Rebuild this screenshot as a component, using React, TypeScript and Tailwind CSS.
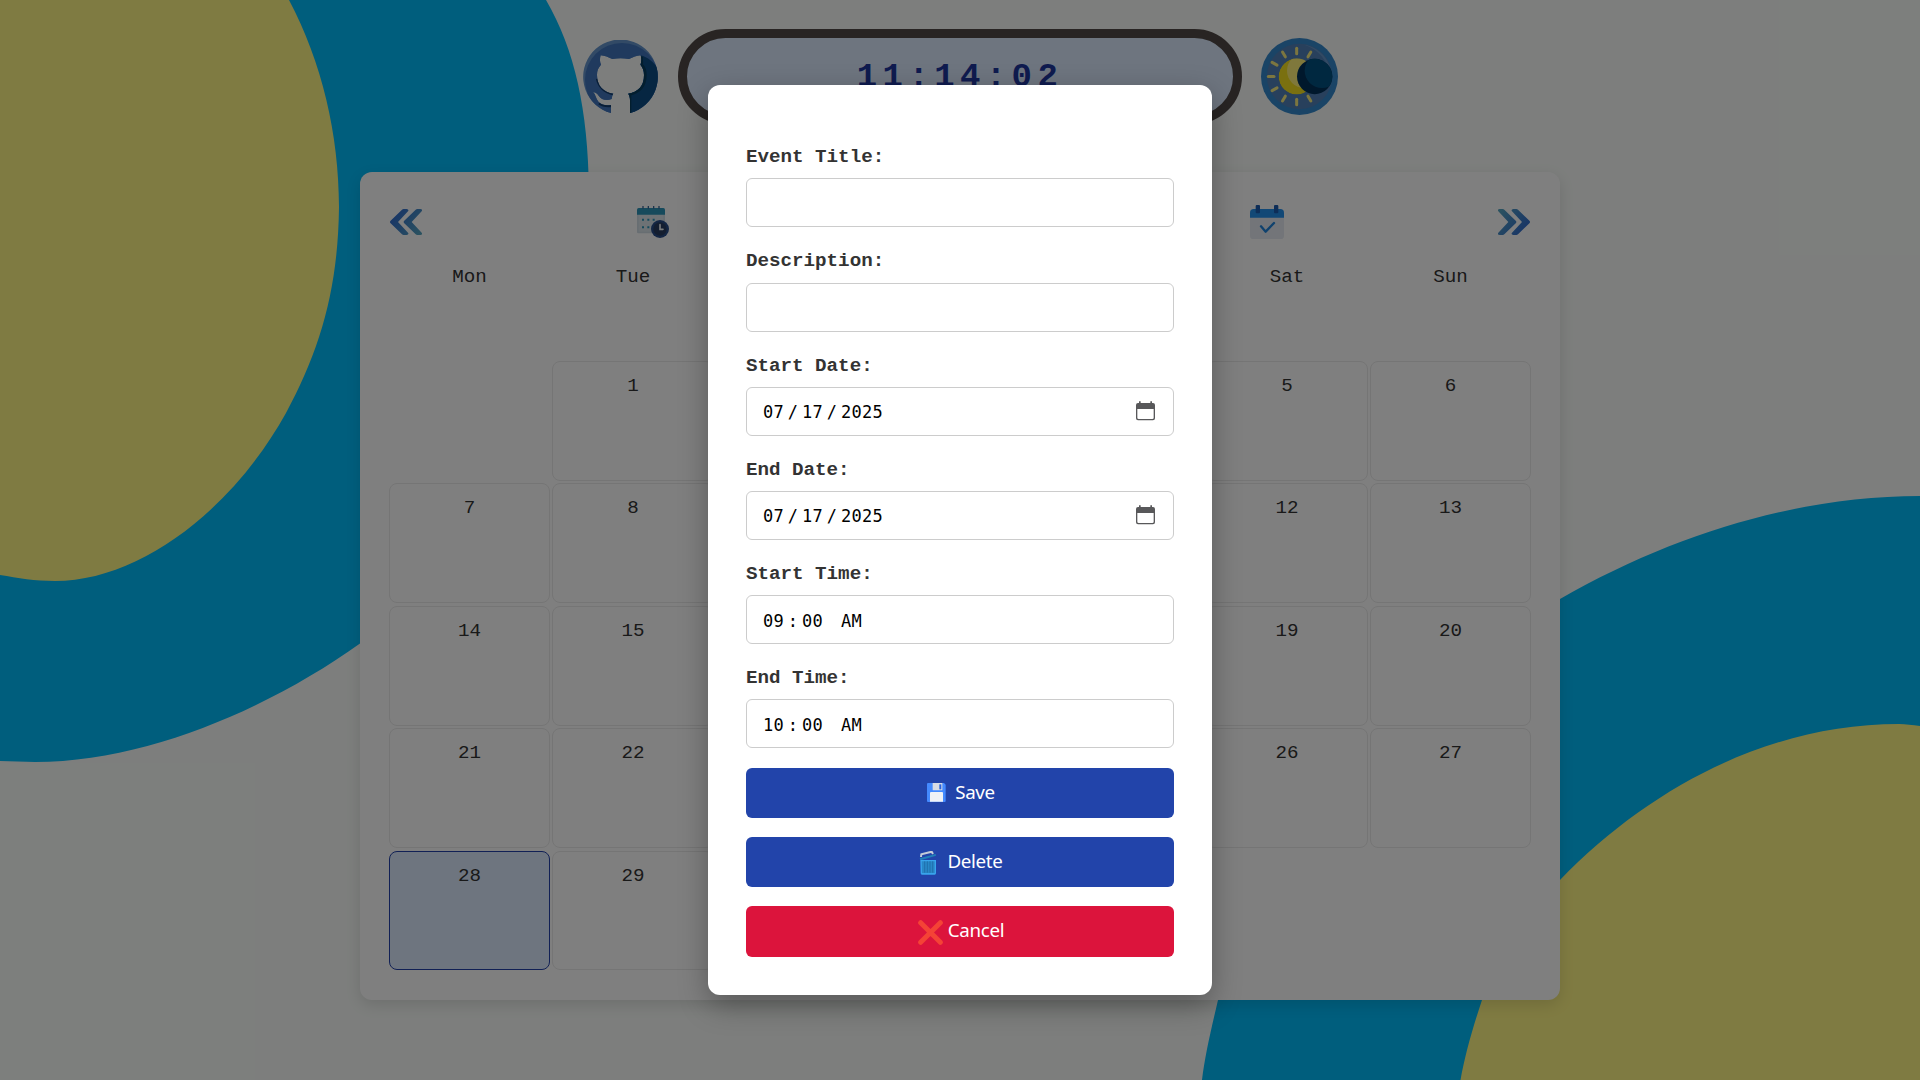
import React from "react";

const DAYS = ["Mon", "Tue", "", "", "", "Sat", "Sun"];
const CELLS: (number | null)[] = [null, ...Array.from({ length: 31 }, (_, i) => i + 1)];

// The open dialog covers the Wednesday to Friday columns, so their labels stay empty.
const isCovered = (index: number) => index % 7 >= 2 && index % 7 <= 4;

function Backdrop() {
  return (
    <svg className="absolute inset-0 h-full w-full" viewBox="0 0 1920 1080">
      <path fill="#00bcfa" d="M0 0H546C575 50 588 110 589 190C592 400 500 550 360 643.500C274 705 150 762 35 762L0 761Z" />
      <path fill="#fff684" d="M0 0H289C322 62 339 135 339 207C338 290 320 350 286 413C232 510 140 581 55 581C35 581 18 578 0 575Z" />
      <path fill="#00bcfa" d="M1920 496C1800 496 1675 533 1560 599C1380 690 1260 830 1218 1000C1211 1030 1205 1055 1202 1080H1920Z" />
      <path fill="#fff684" d="M1920 726C1912 725 1906 724 1899 724C1770 724 1650 787 1560 880C1525 916 1500 955 1482 1000C1472 1030 1465 1055 1460.500 1080H1920Z" />
    </svg>
  );
}

const CAT =
  "M84 219A112 112 0 1 1 141 219V180C141 172 139 165 135 161C165 157 183 138 183 105C183 92 179 82 172 74C176 64 176 56 173 46C160 47 150 52 138 57C122 54 103 54 88 57C76 52 66 47 53 46C50 56 50 64 54 74C45 84 42 92 42 105C42 138 62 157 91 161C88 165 87 170 86 177C70 184 54 178 47 167C42 160 37 156 30 157C38 162 38 176 47 186C56 196 70 197 84 195Z";

function GithubIcon() {
  return (
    <svg className="mt-px h-[75px] w-[75px]" viewBox="0 0 225 225">
      <clipPath id="cat">
        <path d={CAT} />
      </clipPath>
      <g clipPath="url(#cat)">
        <rect width="225" height="225" fill="#6494cc" />
        <circle cx="117" cy="120" r="111" fill="#4074bc" />
        <path fill="#0c4c84" d="M172 46C198 52 216 72 230 92V230H136V156L181 130Z" />
        <path fill="none" stroke="#063c5c" strokeWidth="8" d="M176 50C174 60 178 66 176 74C184 82 187 92 187 105C187 140 166 158 137 163" />
        <path fill="none" stroke="#123c6c" strokeWidth="7" d="M42 116C48 142 64 156 90 162M48 190C58 198 70 199 84 198" />
        <path fill="none" stroke="#063c5c" strokeWidth="6" d="M142 164V222" />
      </g>
    </svg>
  );
}

function ThemeIcon() {
  const rays = [0, 30, 150, 180, 210, 240, 270, 300, 330];
  return (
    <svg className="h-[77px] w-[77px]" viewBox="0 0 231 231">
      <clipPath id="sun">
        <circle cx="107" cy="115.500" r="54" />
      </clipPath>
      <clipPath id="moon">
        <circle cx="161" cy="115.500" r="53" />
      </clipPath>
      <circle cx="115.500" cy="115.500" r="115.500" fill="#3488cc" />
      <circle cx="115.500" cy="115.500" r="98" fill="#5080b8" />
      <path d="M130 20C176 28 210 66 211 112C198 66 172 34 130 20Z" fill="#6494c8" />
      {rays.map((a) => (
        <path key={a} d="M107 47.500V30.500" stroke="#f8ec80" strokeWidth="9" strokeLinecap="round" transform={`rotate(${a} 107 115.500)`} />
      ))}
      <g clipPath="url(#sun)">
        <circle cx="107" cy="115.500" r="54" fill="#f4e020" />
        <circle cx="130" cy="98" r="52" fill="#fff078" />
      </g>
      <circle cx="161" cy="115.500" r="53" fill="#003058" />
      <g clipPath="url(#moon)">
        <circle cx="183" cy="98" r="52" fill="#005080" />
      </g>
    </svg>
  );
}

function Chevrons({ flip = false }: { flip?: boolean }) {
  return (
    <svg className="h-[26px] w-8" viewBox="0 0 96 78">
      <defs>
        <linearGradient id={flip ? "cr" : "cl"} gradientUnits="userSpaceOnUse" x1="20" y1="20" x2="96" y2="78">
          <stop offset="0" stopColor="#3470cc" />
          <stop offset="1" stopColor="#58a8c0" />
        </linearGradient>
      </defs>
      <g transform={flip ? "rotate(180 48 39)" : undefined} fill={flip ? "url(#cr)" : "url(#cl)"}>
        <path d="M36 2Q38 0 41 0H50Q58 1 54 7L24 39L54 71Q58 77 50 78H41Q38 78 36 76L1 42Q-1 39 1 36Z" />
        <path d="M77 2Q79 0 82 0H91Q99 1 95 7L65 39L95 71Q99 77 91 78H82Q79 78 77 76L42 42Q40 39 42 36Z" />
      </g>
    </svg>
  );
}

function CalendarClock() {
  return (
    <svg className="h-8 w-8" viewBox="0 0 96 96">
      <rect x="0" y="20" width="84" height="62" rx="4" fill="#d0dce4" />
      <rect x="5" y="24" width="74" height="53" fill="#dae4ea" />
      <path d="M0 26V11Q0 6 5 6H79Q84 6 84 11V26Z" fill="#2c94b8" />
      <path d="M18 1V7M34 1V7M50 1V7M66 1V7" stroke="#386898" strokeWidth="4" strokeLinecap="round" />
      <path d="M15 41H21M31 41H37M47 41H53M15 64H21M31 64H37" stroke="#2c94b8" strokeWidth="6" />
      <circle cx="69" cy="69" r="27" fill="#284c88" />
      <circle cx="69" cy="69" r="20" fill="#283c60" />
      <path d="M69 56V70H78" stroke="#f0f4f8" strokeWidth="5" fill="none" strokeLinecap="round" />
    </svg>
  );
}

function CalendarCheck() {
  return (
    <svg className="h-[34px] w-[34px]" viewBox="0 0 102 102">
      <path d="M0 34H102V92Q102 102 92 102H10Q0 102 0 92Z" fill="#e6eaf2" />
      <path d="M0 38V23Q0 12 11 12H91Q102 12 102 23V38Z" fill="#2490ec" />
      <rect x="17" y="0" width="13" height="25" rx="3" fill="#1c5cb0" />
      <rect x="72" y="0" width="13" height="25" rx="3" fill="#1c5cb0" />
      <path d="M33 64L47 80L72 54" fill="none" stroke="#2084dc" strokeWidth="7" strokeLinecap="round" strokeLinejoin="round" />
    </svg>
  );
}

function PickerIcon() {
  return (
    <svg className="mb-px h-5 w-[19px]" viewBox="0 0 57 60">
      <path fillRule="evenodd" fill="#58585a" d="M9 1H14V6H43V1H48V6H51Q57 6 57 12V52Q57 58 51 58H6Q0 58 0 52V12Q0 6 6 6H9ZM4 24V50Q4 54 8 54H49Q53 54 53 50V24Z" />
    </svg>
  );
}

function SaveIcon() {
  return (
    <svg className="mt-px mr-[9px] h-[19px] w-[19px]" viewBox="0 0 57 57">
      <path d="M3 0H51L56 5V54Q56 57 53 57H3Q0 57 0 54V3Q0 0 3 0Z" fill="#448aff" />
      <path d="M17 0H46V20Q46 22 44 22H19Q17 22 17 20Z" fill="#d8dce4" />
      <rect x="37" y="4" width="6" height="15" fill="#2a62d8" />
      <path d="M9 30Q9 27 12 27H45Q48 27 48 30V56H9Z" fill="#f0f2f6" />
    </svg>
  );
}

function TrashIcon() {
  return (
    <svg className="mr-[10px] mb-[-4px] h-6 w-[18px]" viewBox="0 0 54 72">
      <path d="M6 18L7 10L38 2L42 9" fill="none" stroke="#c4ccd8" strokeWidth="6" />
      <path d="M2 22L50 9L51 14L28 21L4 28Z" fill="#2080b8" />
      <path d="M4 27H51V67Q51 71 47 71H9Q5 71 5 67Z" fill="#38a4ec" />
      <path d="M8 31H47V66H9Z" fill="#2888c8" />
      <path d="M17 31V65M25 31V65M33 31V65M41 31V65" stroke="#2070ac" strokeWidth="3" />
    </svg>
  );
}

function CrossIcon() {
  return (
    <svg className="mr-[5px] mb-[-4px] h-[25px] w-[25px]" viewBox="0 0 75 75">
      <path d="M8 8L67 67M67 8L8 67" stroke="#f44336" strokeWidth="15" strokeLinecap="round" />
    </svg>
  );
}

function Segments({ parts, separator }: { parts: string[]; separator: string }) {
  return (
    <div className="flex pt-0.5 font-['DejaVu_Sans_Mono',monospace] text-[17px] leading-[22px] tracking-[0.3px] text-black">
      {parts.map((p, i) => (
        <React.Fragment key={i}>
          {i > 0 && <span className="w-[18px] text-center">{p === "AM" ? "" : separator}</span>}
          <span className={p.length === 4 ? "w-[42px]" : "w-[21px]"}>{p}</span>
        </React.Fragment>
      ))}
    </div>
  );
}

function Field({ label, children }: { label: string; children?: React.ReactNode }) {
  return (
    <div className="flex h-[81.2px] flex-col justify-between">
      <label className="font-['Liberation_Mono',monospace] text-[19.2px] leading-[22px] font-bold text-[#333]">{label}</label>
      <div className="flex h-[49px] items-center justify-between rounded-[6px] border border-[#ccc] bg-white pr-[18px] pl-4">{children}</div>
    </div>
  );
}

const BUTTON =
  "flex h-[50.2px] items-center justify-center rounded-[6px] pb-0.5 pl-0.5 font-['Noto_Sans',sans-serif] text-[18.8px] tracking-[-0.35px] text-white";

export default function App() {
  return (
    <div className="relative h-[1080px] w-[1920px] overflow-hidden bg-[#fafdfa] font-['Liberation_Mono',monospace] text-[#333]">
      <Backdrop />
      <div className="relative flex h-full flex-col items-center pt-[29px]">
        <header className="ml-px flex items-center">
          <GithubIcon />
          <div className="mr-[19px] ml-5 flex h-[95px] w-[564px] items-center justify-center rounded-full border-[9px] border-[#504846] bg-[#dcebff] pt-px text-[34px] leading-none font-bold tracking-[5.4px] text-[#1e369e]">
            11:14:02
          </div>
          <ThemeIcon />
        </header>
        <main className="mt-12 h-[828px] w-[1200px] rounded-xl bg-white px-[29px] pt-7 shadow-[0_5px_15px_rgba(0,0,0,0.12)]">
          <div className="flex h-11 items-center justify-between px-px">
            <Chevrons />
            <div className="flex w-[647px] items-center justify-between">
              <CalendarClock />
              <CalendarCheck />
            </div>
            <Chevrons flip />
          </div>
          <div className="mt-[21px] grid grid-cols-7 gap-[2.4px] text-center text-[19.2px] leading-6">
            {DAYS.map((d, i) => (
              <div key={i}>{d}</div>
            ))}
          </div>
          <div className="mt-[72px] grid auto-rows-[119.7px] grid-cols-7 gap-x-[2.4px] gap-y-[2.75px] text-center text-[19.2px] leading-6">
            {CELLS.map((n, i) =>
              n === null ? (
                <div key={i} />
              ) : (
                <div key={i} className={n === 28 ? "rounded-lg border border-[#2241aa] bg-[#dcebff] pt-3" : "rounded-lg border border-[#eaeaea] pt-3"}>
                  {isCovered(i) ? null : n}
                </div>
              ),
            )}
          </div>
        </main>
      </div>

      <div className="absolute inset-0 flex items-center justify-center bg-black/50">
        <div className="flex h-[910px] w-[504px] flex-col rounded-xl bg-white px-[38px] pt-[61.2px] shadow-[0_10px_30px_rgba(0,0,0,0.3)]">
          <div className="flex flex-col gap-[23px]">
            <Field label="Event Title:" />
            <Field label="Description:" />
            <Field label="Start Date:">
              <Segments parts={["07", "17", "2025"]} separator="/" />
              <PickerIcon />
            </Field>
            <Field label="End Date:">
              <Segments parts={["07", "17", "2025"]} separator="/" />
              <PickerIcon />
            </Field>
            <Field label="Start Time:">
              <Segments parts={["09", "00", "AM"]} separator=":" />
            </Field>
            <Field label="End Time:">
              <Segments parts={["10", "00", "AM"]} separator=":" />
            </Field>
          </div>
          <div className="mt-[19.4px] flex flex-col gap-[19.2px]">
            <button className={`${BUTTON} bg-[#2244aa]`}>
              <SaveIcon />
              Save
            </button>
            <button className={`${BUTTON} bg-[#2244aa]`}>
              <TrashIcon />
              Delete
            </button>
            <button className={`${BUTTON} bg-[#dc143c]`}>
              <CrossIcon />
              Cancel
            </button>
          </div>
        </div>
      </div>
    </div>
  );
}
